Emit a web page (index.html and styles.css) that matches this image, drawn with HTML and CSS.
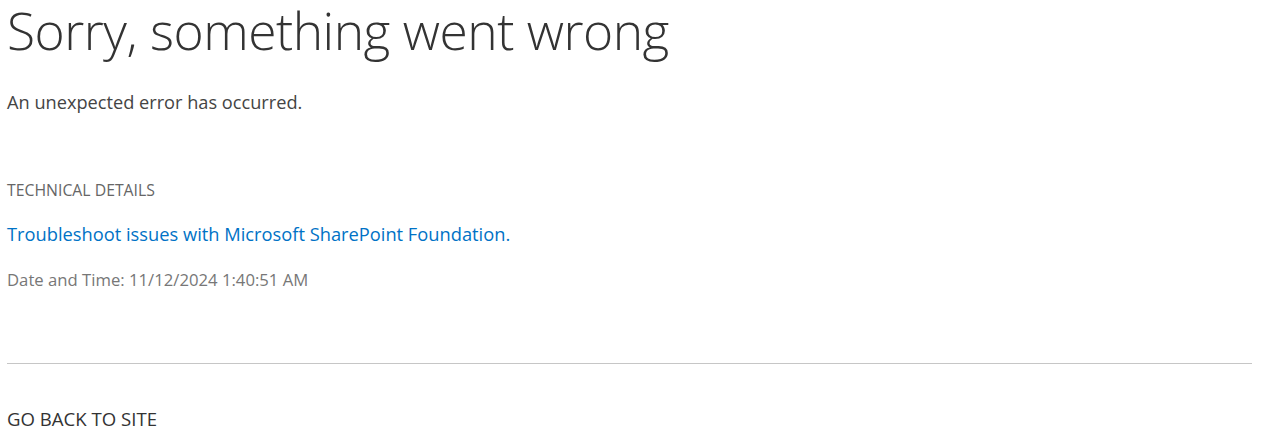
FILE: index.html
```html
<!DOCTYPE html>
<html lang="en">
<head>
<meta charset="utf-8">
<title>Error</title>
<link rel="stylesheet" href="styles.css">
</head>
<body>
<main class="page">
  <h1 class="title">Sorry, something went wrong</h1>
  <p class="message">An unexpected error has occurred.</p>
  <section class="details">
    <h2 class="details-title">TECHNICAL DETAILS</h2>
    <a class="trouble-link" href="#">Troubleshoot issues with Microsoft SharePoint Foundation.</a>
    <p class="datetime">Date and Time: 11/12/2024 1:40:51 AM</p>
  </section>
  <hr class="divider">
  <a class="back-link" href="#">GO BACK TO SITE</a>
</main>
</body>
</html>
```
FILE: styles.css
```css
html, body {
  margin: 0;
  padding: 0;
  background: #ffffff;
}
body {
  font-family: "Open Sans", "Noto Sans", "Liberation Sans", sans-serif;
  color: #444444;
}
.page {
  padding: 0 14px 0 7px;
  display: flex;
  flex-direction: column;
  align-items: flex-start;
}
.title {
  margin: 0;
  font-size: 51.5px;
  font-weight: 300;
  line-height: 60px;
  color: #333333;
  letter-spacing: -0.5px;
  white-space: nowrap;
}
.message {
  margin: 30px 0 0;
  font-size: 18.2px;
  line-height: 24px;
  color: #444444;
}
.details {
  margin-top: 66px;
  display: flex;
  flex-direction: column;
  align-items: flex-start;
}
.details-title {
  margin: 0;
  font-size: 15.8px;
  font-weight: 400;
  line-height: 20px;
  color: #666666;
}
.trouble-link {
  margin-top: 22px;
  font-size: 18.3px;
  line-height: 24px;
  color: #0072c6;
  text-decoration: none;
}
.datetime {
  margin: 23px 0 0;
  font-size: 16.7px;
  line-height: 22px;
  color: #777777;
}
.divider {
  align-self: stretch;
  margin: 72px 0 0;
  border: 0;
  border-top: 1px solid #c6c6c6;
  height: 0;
}
.back-link {
  margin-top: 43px;
  font-size: 18.6px;
  line-height: 24px;
  color: #333333;
  text-decoration: none;
}
```
